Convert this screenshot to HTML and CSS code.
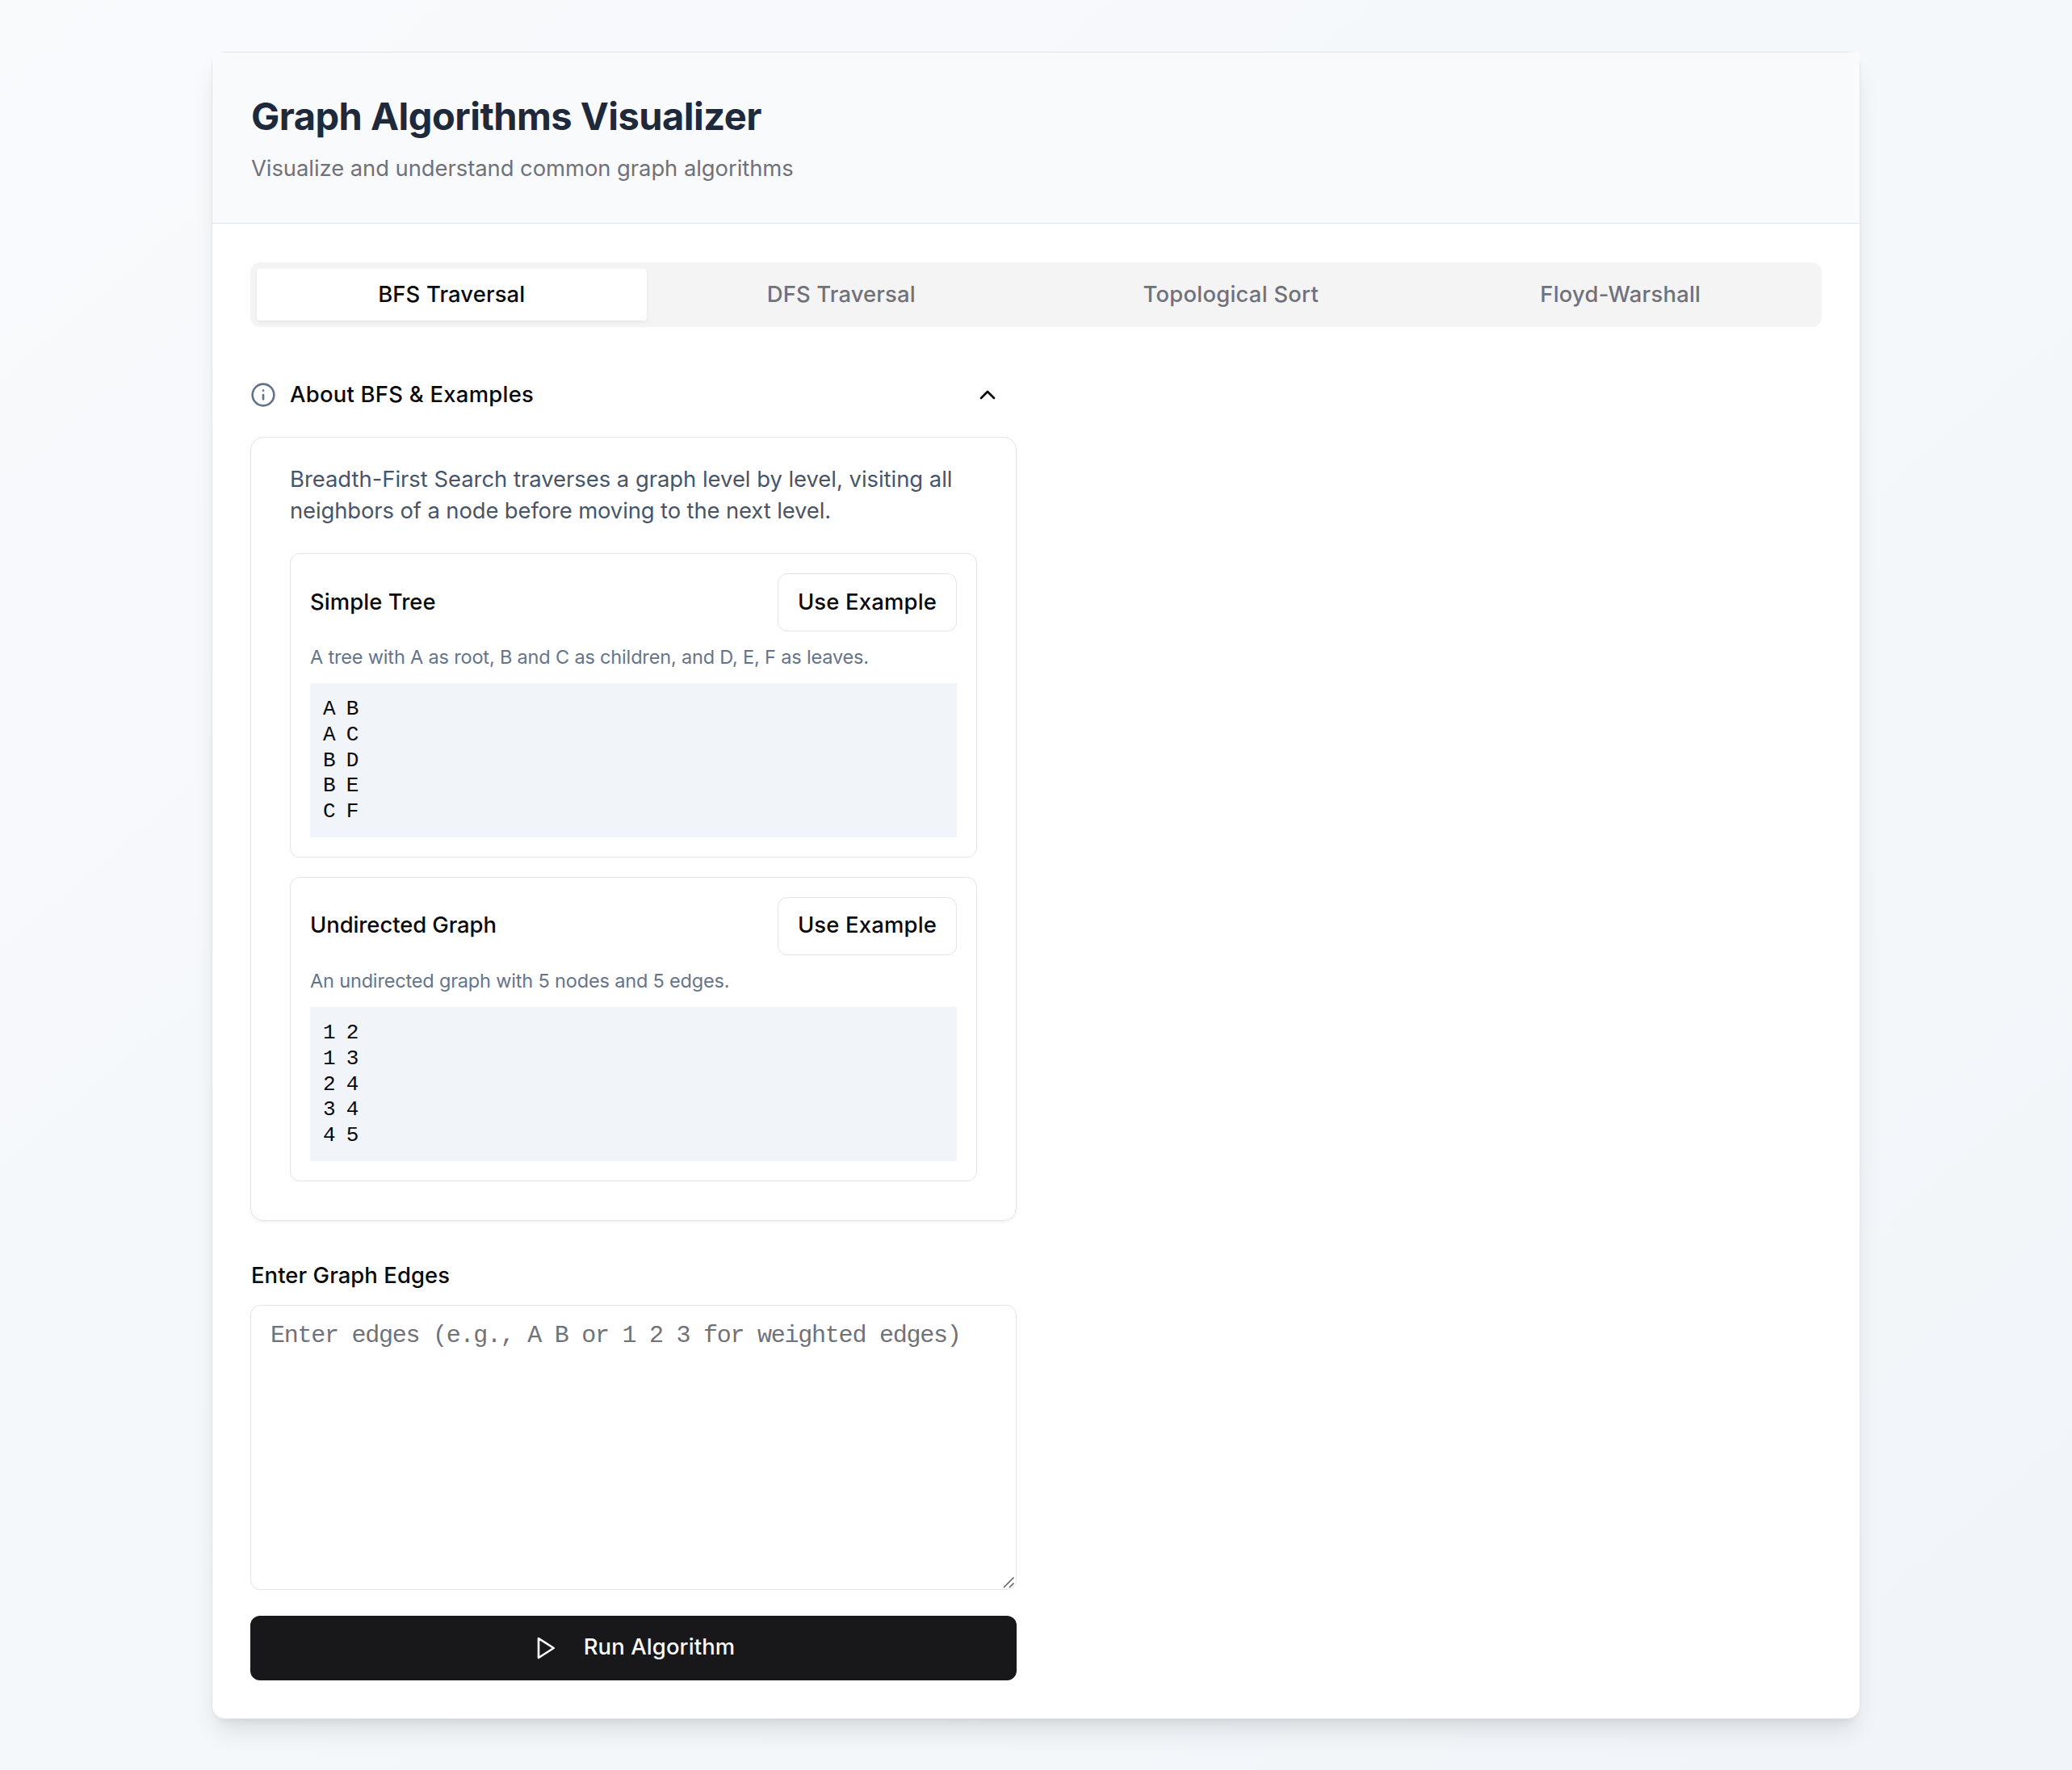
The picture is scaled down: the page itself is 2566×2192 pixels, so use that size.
FILE: index.html
```html
<!DOCTYPE html>
<html lang="en">
<head>
  <meta charset="utf-8">
  <title>Graph Algorithms Visualizer</title>
  <link rel="stylesheet" href="styles.css">
</head>
<body>
  <main class="card">
    <header class="card-header">
      <h1 class="title">Graph Algorithms Visualizer</h1>
      <p class="subtitle">Visualize and understand common graph algorithms</p>
    </header>
    <div class="card-body">
      <nav class="tabs">
        <button class="tab tab-active">BFS Traversal</button>
        <button class="tab">DFS Traversal</button>
        <button class="tab tab-wide">Topological Sort</button>
        <button class="tab tab-wide">Floyd-Warshall</button>
      </nav>
      <div class="columns">
        <section class="column">
          <div class="about">
            <svg class="icon icon-info" viewBox="0 0 24 24"><circle cx="12" cy="12" r="10"/><path d="M12 16v-4"/><path d="M12 8h.01"/></svg>
            <span class="about-label">About BFS &amp; Examples</span>
            <svg class="icon icon-chevron" viewBox="0 0 24 24"><path d="m18 15-6-6-6 6"/></svg>
          </div>
          <div class="panel">
            <p class="panel-text"><span class="line-one">Breadth-First Search traverses a graph level by level, visiting all</span><br>neighbors of a node before moving to the next level.</p>
            <div class="examples">
              <article class="example">
                <div class="example-head">
                  <h2 class="example-title">Simple Tree</h2>
                  <button class="use-button">Use Example</button>
                </div>
                <p class="example-text">A tree with A as root, B and C as children, and D, E, F as leaves.</p>
                <pre class="code">A B
A C
B D
B E
C F</pre>
              </article>
              <article class="example">
                <div class="example-head">
                  <h2 class="example-title example-title-tight">Undirected Graph</h2>
                  <button class="use-button">Use Example</button>
                </div>
                <p class="example-text">An undirected graph with 5 nodes and 5 edges.</p>
                <pre class="code">1 2
1 3
2 4
3 4
4 5</pre>
              </article>
            </div>
          </div>
          <label class="edges-label" for="edges">Enter Graph Edges</label>
          <div class="edges-field">
            <textarea class="edges" id="edges" placeholder="Enter edges (e.g., A B or 1 2 3 for weighted edges)"></textarea>
            <svg class="grip" viewBox="0 0 14 15"><path d="M1 14 13.5 1.5M8 14 13.5 8.5"/></svg>
          </div>
          <button class="run-button">
            <svg class="icon" viewBox="0 0 24 24"><polygon points="6 3 20 12 6 21 6 3"/></svg>
            <span class="run-label">Run Algorithm</span>
          </button>
        </section>
      </div>
    </div>
  </main>
</body>
</html>
```
FILE: styles.css
```css
* {
  box-sizing: border-box;
  margin: 0;
  padding: 0;
}

body {
  min-height: 2192px;
  padding: 64px 262px 63px;
  background: linear-gradient(to bottom right, #f9fafc, #f4f8fb 50%, #f1f5f9);
  color: #09090b;
  font: 400 27.4px/39px Inter, "Liberation Sans", sans-serif;
}

button {
  border: 0;
  background: none;
  color: inherit;
  font: inherit;
}

.card {
  border: 1px solid #e4e4e7;
  border-radius: 16px;
  background: #fff;
  box-shadow: 0 20px 30px -6px rgb(0 0 0 / 0.1), 0 8px 12px -8px rgb(0 0 0 / 0.1);
}

.card-header {
  padding: 48px;
  border-bottom: 1px solid #e4e4e7;
  background: #f9fafc;
}

.title {
  margin-bottom: 14px;
  color: #1e293b;
  font-size: 47px;
  font-weight: 700;
  line-height: 61px;
  letter-spacing: -0.52px;
}

.subtitle {
  color: #71717a;
  line-height: 40px;
  letter-spacing: -0.05px;
}

.card-body {
  padding: 48px 47px 47px;
}

.tabs {
  display: grid;
  grid-template-columns: repeat(4, 1fr);
  height: 80px;
  padding: 8px;
  border-radius: 12px;
  background: #f4f4f4;
}

.tab {
  padding-bottom: 2px;
  border-radius: 4px;
  color: #71717a;
  font-weight: 500;
  letter-spacing: 0.15px;
}

.tab-wide {
  letter-spacing: 0.25px;
}

.tab-active {
  background: #fff;
  color: #09090b;
  box-shadow: 0 2px 4px rgb(0 0 0 / 0.06);
}

.columns {
  display: grid;
  grid-template-columns: 1fr 1fr;
  gap: 48px;
  margin-top: 48px;
}

.column {
  display: flex;
  flex-direction: column;
}

.icon {
  width: 32px;
  height: 32px;
  fill: none;
  stroke: currentColor;
  stroke-width: 2;
  stroke-linecap: round;
  stroke-linejoin: round;
}

.about {
  display: flex;
  align-items: center;
  gap: 17px;
  height: 72px;
  margin-bottom: 16px;
  padding-right: 20px;
}

.about-label {
  flex: 1;
  padding-bottom: 2px;
  font-weight: 500;
  letter-spacing: 0.269px;
}

.icon-info {
  color: #64748b;
}

.panel {
  padding: 31.5px 48px 48px;
  border: 1px solid #e4e4e7;
  border-radius: 16px;
  box-shadow: 0 2px 4px rgb(0 0 0 / 0.05);
}

.panel-text {
  margin-bottom: 33.5px;
  color: #475569;
  letter-spacing: -0.1px;
  white-space: nowrap;
}

.line-one {
  letter-spacing: -0.01px;
}

.examples {
  display: grid;
  gap: 24px;
}

.example {
  padding: 24px;
  border: 1px solid #e4e4e7;
  border-radius: 12px;
}

.example-head {
  display: flex;
  align-items: center;
  justify-content: space-between;
  height: 72px;
}

.example-title {
  padding-bottom: 2px;
  font-size: 27.4px;
  font-weight: 500;
  letter-spacing: 0.086px;
}

.example-title-tight {
  letter-spacing: -0.06px;
}

.use-button {
  width: 222px;
  height: 72px;
  padding-bottom: 2px;
  border: 1px solid #e4e4e7;
  border-radius: 12px;
  font-weight: 500;
  letter-spacing: 0.2px;
}

.example-text {
  margin: 16px 0;
  padding-bottom: 1px;
  color: #64748b;
  font-size: 23.5px;
  line-height: 31px;
  letter-spacing: -0.17px;
}

.code {
  padding: 17px 16px 15px;
  background: #f1f5f9;
  font: 26px/31.8px "Liberation Mono", monospace;
  letter-spacing: -1.2px;
}

.edges-label {
  margin: 48px 0 18px;
  padding-left: 1px;
  line-height: 38px;
  font-weight: 500;
  letter-spacing: 0.09px;
}

.edges-field {
  position: relative;
  height: 353px;
}

.edges {
  display: block;
  width: 100%;
  height: 100%;
  padding: 17px 24px;
  border: 1px solid #e4e4e7;
  border-radius: 12px;
  background: #fff;
  font: 30px/40px "Liberation Mono", monospace;
  letter-spacing: -1.25px;
  resize: none;
}

.edges::placeholder {
  color: #71717a;
}

.grip {
  position: absolute;
  right: 3px;
  bottom: 2px;
  width: 14px;
  height: 15px;
  fill: none;
  stroke: #5c5c5c;
  stroke-width: 1.5;
}

.run-button {
  display: flex;
  align-items: center;
  justify-content: center;
  gap: 32px;
  height: 80px;
  margin-top: 32px;
  border-radius: 12px;
  background: #18181b;
  color: #fafafa;
}

.run-label {
  padding-bottom: 2px;
  font-weight: 500;
  letter-spacing: 0.14px;
}
```
